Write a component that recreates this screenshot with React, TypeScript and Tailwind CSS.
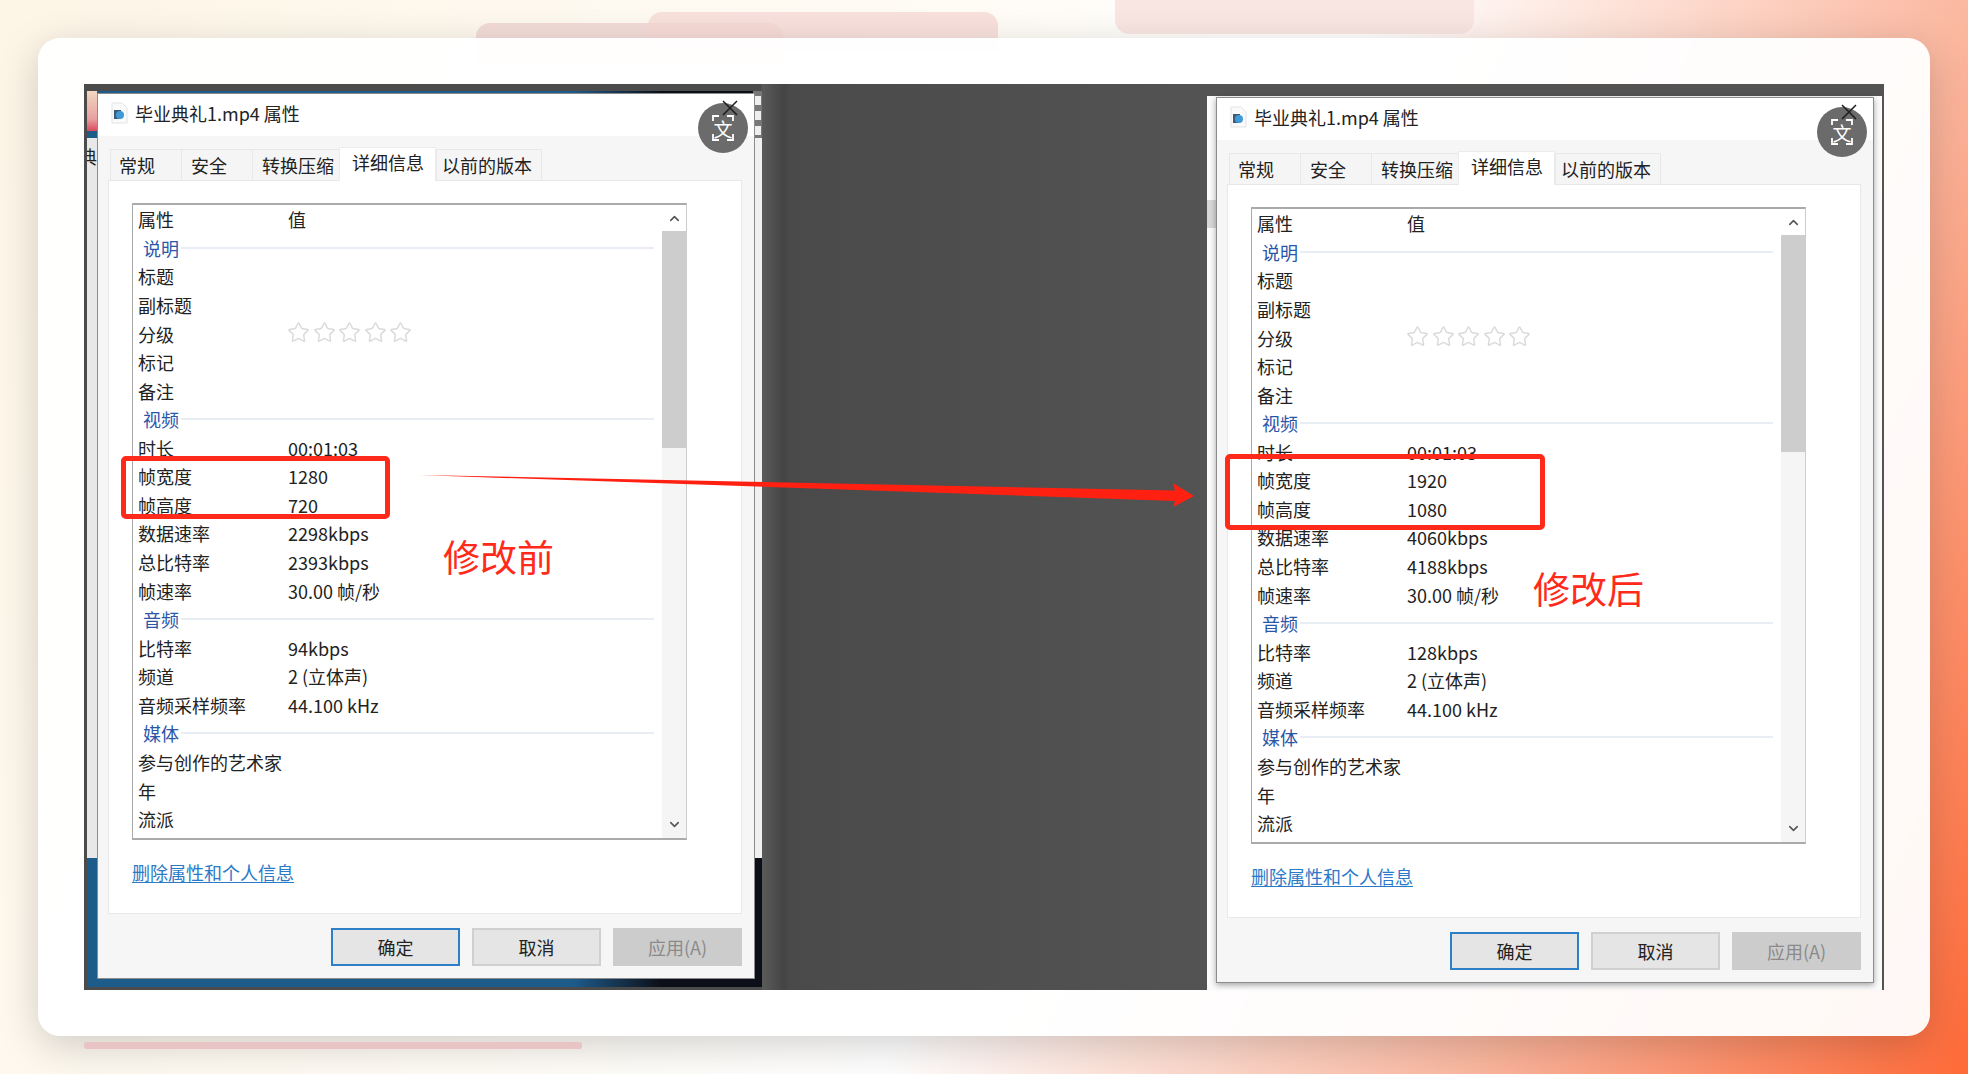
import { ChevronDown, ChevronUp, Star } from 'lucide-react'

type Row =
  | { kind: 'section'; label: string }
  | { kind: 'row'; label: string; value?: string; stars?: boolean }

const font = 'font-["Noto_Sans_CJK_SC","Liberation_Sans",sans-serif]'

function rowsFor(v: { w: string; h: string; rate: string; total: string; audio: string }): Row[] {
  return [
    { kind: 'row', label: '属性', value: '值' },
    { kind: 'section', label: '说明' },
    { kind: 'row', label: '标题' },
    { kind: 'row', label: '副标题' },
    { kind: 'row', label: '分级', stars: true },
    { kind: 'row', label: '标记' },
    { kind: 'row', label: '备注' },
    { kind: 'section', label: '视频' },
    { kind: 'row', label: '时长', value: '00:01:03' },
    { kind: 'row', label: '帧宽度', value: v.w },
    { kind: 'row', label: '帧高度', value: v.h },
    { kind: 'row', label: '数据速率', value: v.rate },
    { kind: 'row', label: '总比特率', value: v.total },
    { kind: 'row', label: '帧速率', value: '30.00 帧/秒' },
    { kind: 'section', label: '音频' },
    { kind: 'row', label: '比特率', value: v.audio },
    { kind: 'row', label: '频道', value: '2 (立体声)' },
    { kind: 'row', label: '音频采样频率', value: '44.100 kHz' },
    { kind: 'section', label: '媒体' },
    { kind: 'row', label: '参与创作的艺术家' },
    { kind: 'row', label: '年' },
    { kind: 'row', label: '流派' },
  ]
}

function FileIcon() {
  return (
    <svg width="17" height="22" viewBox="0 0 17 22" className="shrink-0">
      <path d="M1 1h10l5 5v15H1z" fill="#fafafa" stroke="#e3e3e3" />
      <rect x="3" y="8" width="7" height="9" fill="#3d5a78" />
      <circle cx="9" cy="13" r="4" fill="#3f9ad6" />
    </svg>
  )
}

function TranslateBadge() {
  return (
    <div className="absolute right-[6px] top-[9px] w-[50px] h-[50px] rounded-full bg-[#6b6b6b] flex items-center justify-center">
      <svg width="46" height="46" viewBox="0 0 46 46" fill="none" stroke="white" strokeWidth="1.8" className="absolute left-[2px] top-[2px]">
        <path d="M13 16v-5h6M27 11h6v5M33 29v6h-6M19 35h-6v-6" />
      </svg>
      <span className={`${font} text-white text-[19px] leading-none relative`}>文</span>
      <svg width="16" height="16" viewBox="0 0 16 16" stroke="#1c1c1c" strokeWidth="1.5" className="absolute left-[24px] -top-[3px]">
        <path d="M1 1l14 14M15 1L1 15" />
      </svg>
    </div>
  )
}

function Tabs() {
  const tabs = [
    { label: '常规', cls: 'w-[72px] pl-[8px]' },
    { label: '安全', cls: 'w-[72px] pl-[9px]' },
    { label: '转换压缩', cls: 'w-[88px] pl-[9px]' },
    { label: '详细信息', cls: 'w-[97px] pl-[12px]', active: true },
    { label: '以前的版本', cls: 'w-[106px] pl-[5px]' },
  ]
  return (
    <div className="flex items-end h-[33px] pl-[2px]">
      {tabs.map((t) =>
        t.active ? (
          <div key={t.label} className={`${t.cls} h-[34px] -mb-px bg-white border border-b-0 border-[#ececec] flex items-start pt-[5px] relative z-10 whitespace-nowrap`}>
            {t.label}
          </div>
        ) : (
          <div key={t.label} className={`${t.cls} h-[31px] bg-[#f5f5f5] border border-b-0 border-[#e8e8e8] -mr-px flex items-start pt-[6px] whitespace-nowrap`}>
            {t.label}
          </div>
        ),
      )}
    </div>
  )
}

function DetailRow({ row }: { row: Row }) {
  if (row.kind === 'section') {
    return (
      <div className="h-[28.57px] flex items-center pl-[10px] pr-[8px] text-[#2a56a8]">
        <span className="shrink-0">{row.label}</span>
        <div className="flex-1 h-[2px] bg-[#e9eef4] ml-[2px]" />
      </div>
    )
  }
  return (
    <div className="h-[28.57px] flex items-center pl-[5px] text-[#222]">
      <span className="w-[150px] shrink-0 whitespace-nowrap">{row.label}</span>
      {row.value && <span>{row.value}</span>}
      {row.stars && (
        <div className="flex gap-[2.5px] -ml-[1px] -mt-[2px]">
          {[0, 1, 2, 3, 4].map((i) => (
            <Star key={i} size={23} strokeWidth={1.5} className="text-[#dadada]" />
          ))}
        </div>
      )}
    </div>
  )
}

function PropertiesDialog({ rows, className }: { rows: Row[]; className: string }) {
  return (
    <div className={`${font} relative flex flex-col w-[658px] h-[886px] bg-[#f6f6f6] border border-[#8c8c8c] text-[18px] leading-none text-[#222] ${className}`}>
      <div className="h-[42px] bg-white flex items-center pl-[13px] pb-[4px] gap-[7px] shrink-0">
        <FileIcon />
        <span>毕业典礼1.mp4 属性</span>
      </div>
      <div className="flex-1 flex flex-col pl-[10px] pr-[12px] pt-[11px]">
        <Tabs />
        <div className="h-[734px] bg-white border border-[#e8e8e8] pl-[23px] pt-[22px]">
          <div className="w-[555px] h-[637px] flex border-t-2 border-l border-b-2 border-r border-t-[#aaa] border-l-[#aaa] border-b-[#aaa] border-r-[#ccc]">
            <div className="flex-1">
              {rows.map((r) => (
                <DetailRow key={r.label} row={r} />
              ))}
            </div>
            <div className="w-[24px] bg-[#f5f5f5] flex flex-col items-center">
              <div className="h-[26px] bg-white w-full flex items-center justify-center">
                <ChevronUp size={15} strokeWidth={2.5} className="text-[#555]" />
              </div>
              <div className="w-full h-[217px] bg-[#cdcdcd]" />
              <ChevronDown size={15} strokeWidth={2.5} className="text-[#555] mt-auto mb-[6px]" />
            </div>
          </div>
          <a className="block mt-[23px] text-[#2a7ac8] underline underline-offset-2 w-fit">删除属性和个人信息</a>
        </div>
        <div className="flex justify-end gap-[12px] mt-[14px]">
          <div className="w-[129px] h-[38px] bg-[#e5e5e5] border-2 border-[#2d7fc8] flex items-center justify-center">确定</div>
          <div className="w-[129px] h-[38px] bg-[#e5e5e5] border-2 border-[#d0d0d0] flex items-center justify-center">取消</div>
          <div className="w-[129px] h-[38px] bg-[#cccccc] text-[#8a8a8a] flex items-center justify-center">应用(A)</div>
        </div>
      </div>
      <TranslateBadge />
    </div>
  )
}

function Annotations() {
  return (
    <>
      <div className="absolute left-[121px] top-[456px] w-[269px] h-[63px] border-[5px] border-[#ff2a1a] rounded-[5px]" />
      <div className="absolute left-[1225px] top-[454px] w-[320px] h-[76px] border-[5px] border-[#ff2a1a] rounded-[5px]" />
      <svg className="absolute left-0 top-0" width="1968" height="1074">
        <polygon points="419,475 1175,490.5 1173,483 1194,496 1173,507 1175,501" fill="#ff2012" />
      </svg>
      <span className={`${font} absolute left-[443px] top-[529px] text-[37px] leading-[54px] text-[#ff2a1a]`}>修改前</span>
      <span className={`${font} absolute left-[1533px] top-[561px] text-[37px] leading-[54px] text-[#ff2a1a]`}>修改后</span>
    </>
  )
}

export default function App() {
  const before = rowsFor({ w: '1280', h: '720', rate: '2298kbps', total: '2393kbps', audio: '94kbps' })
  const after = rowsFor({ w: '1920', h: '1080', rate: '4060kbps', total: '4188kbps', audio: '128kbps' })

  return (
    <div className="relative w-[1968px] h-[1074px] overflow-hidden pt-[38px] pl-[38px] bg-[linear-gradient(115deg,#fdf5e6_0%,#fffcf6_40%,#ffffff_56%,#fbb79f_80%,#ff6a38_100%)]">
      <div className="absolute left-[476px] top-[23px] w-[307px] h-[40px] rounded-t-[14px] bg-[#f3dcd8]" />
      <div className="absolute left-[648px] top-[12px] w-[350px] h-[40px] rounded-t-[14px] bg-[#f6d9d6]/80" />
      <div className="absolute left-[1115px] -top-[10px] w-[359px] h-[44px] rounded-b-[14px] bg-[#f9e6e3]" />
      <div className="absolute left-[84px] top-[1042px] w-[498px] h-[7px] rounded-[2px] bg-[#e8c4c4] z-10" />

      <div className="relative w-[1892px] h-[998px] rounded-[22px] bg-white/95 p-[46px] shadow-[0_10px_40px_rgba(0,0,0,0.18)]">
        <div className="w-[1800px] h-[906px] flex items-start bg-[linear-gradient(90deg,#4b4b4b_0%,#4b4b4b_37.6%,#5a5a5a_37.7%,#444444_38.9%,#4a4a4a_39.2%,#535353_62%)]">
          {/* left half: properties window sitting on the desktop */}
          <div className="relative ml-[3px] mt-[7px] w-[675px] h-[896px] pl-[10px] pt-[2px] overflow-hidden bg-[linear-gradient(90deg,#1d5b8a_0%,#1d5b8a_72%,#0d0f18_85%)]">
            <div className="absolute left-0 top-0 w-[10px] h-[40px] bg-[linear-gradient(180deg,#f0d8c0,#e8a0a0_70%,#d84a5a)]" />
            <div className="absolute left-0 top-[47px] w-[10px] h-[720px] bg-[#e8e8e8] overflow-hidden">
              <span className="absolute -left-[8px] top-[9px] text-[18px] leading-none text-[#222] font-['Noto_Sans_CJK_SC']">典</span>
            </div>
            <div className="absolute right-0 top-0 w-[9px] h-[47px] bg-[#777] flex flex-col items-center gap-[6px] pt-[5px]">
              <div className="w-[7px] h-[9px] bg-[#eeeeee]" />
              <div className="w-[7px] h-[9px] bg-[#eeeeee]" />
              <div className="w-[7px] h-[9px] bg-[#eeeeee]" />
            </div>
            <div className="absolute right-0 top-[47px] w-[9px] h-[720px] bg-[#f0f0f0] overflow-hidden" />
            <PropertiesDialog rows={before} className="" />
          </div>

          {/* right half: same window after the change */}
          <div className="relative ml-auto mr-[2px] mt-[12px] w-[675px] h-[894px] bg-[#fbfbfb] pl-[9px] pt-[1px]">
            <div className="absolute left-0 top-[104px] w-[9px] h-[28px] bg-[#d8d8d8]" />
            <PropertiesDialog rows={after} className="shadow-[0_2px_6px_rgba(0,0,0,0.35)]" />
          </div>
        </div>
      </div>

      <Annotations />
    </div>
  )
}
